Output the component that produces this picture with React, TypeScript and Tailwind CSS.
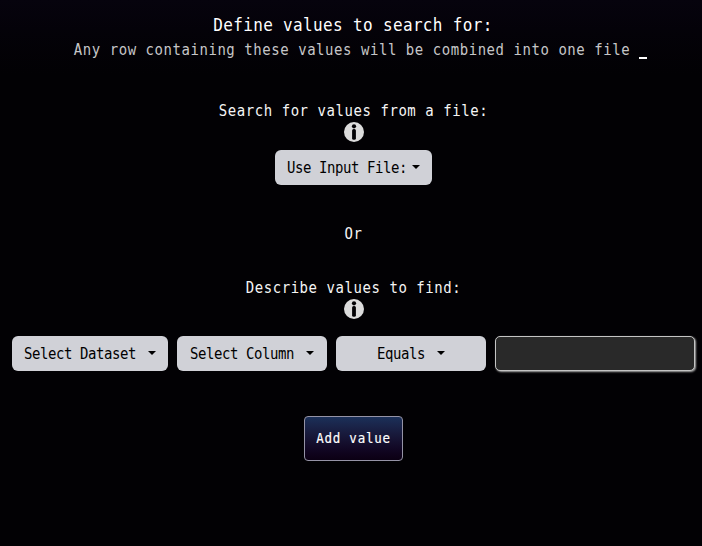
import type { ReactNode } from "react";

const MONO = "font-['DejaVu_Sans_Mono','Liberation_Mono',monospace]";

function Caret({ className = "" }: { className?: string }) {
  return (
    <span
      className={`block h-0 w-0 border-x-[4px] border-t-[4px] border-x-transparent border-t-black ${className}`}
    />
  );
}

function Select({ label, className, caret = "ml-[12px]" }: { label: string; className: string; caret?: string }) {
  return (
    <button
      className={`flex h-[35px] items-center justify-center whitespace-nowrap rounded-md bg-[#d0d1d7] text-[14px] tracking-[-0.43px] text-black ${className}`}
    >
      <span className="mt-px block scale-y-108">{label}</span>
      <Caret className={`-mt-[2px] ${caret}`} />
    </button>
  );
}

function InfoIcon() {
  return (
    <svg width="20" height="20" viewBox="0 0 20 20" className="block">
      <circle cx="10" cy="10" r="10" fill="#dcdcdc" />
      <circle cx="10" cy="4.3" r="2.1" fill="#020104" />
      <rect x="8.1" y="7" width="3.8" height="10.8" rx="1.6" fill="#020104" />
    </svg>
  );
}

function Label({ children, className = "" }: { children: ReactNode; className?: string }) {
  return (
    <p className={`h-5 origin-top scale-y-108 whitespace-nowrap text-[14px] leading-5 tracking-[0.55px] text-[#f5f5f5] ${className}`}>
      {children}
    </p>
  );
}

export default function App() {
  return (
    <main
      className={`flex h-[546px] w-[702px] flex-col items-center overflow-hidden bg-[#020104] bg-linear-to-b from-[#06030d] to-[#020104] to-[75px] pl-[5px] ${MONO}`}
    >
      <h1 className="mt-[13px] mr-px h-6 origin-top scale-y-107 whitespace-nowrap text-[16px] leading-6 tracking-[0.35px] text-white">
        Define values to search for:
      </h1>
      <div className="mt-[2px] ml-[14px] flex h-5 items-end">
        <p className="origin-top scale-y-108 whitespace-nowrap text-[14px] leading-5 tracking-[0.545px] text-[#c6c6c8]">
          Any row containing these values will be combined into one file
        </p>
        <span className="ml-[9px] block h-[2px] w-[8px] bg-white" />
      </div>

      <Label className="mt-[41px]">Search for values from a file:</Label>
      <div className="mt-[2px]">
        <InfoIcon />
      </div>
      <Select label="Use Input File:" className="mt-[8px] w-[157px]" caret="ml-[5px]" />

      <Label className="mt-[38px]">Or</Label>

      <Label className="mt-[34px]">Describe values to find:</Label>
      <div className="mt-[2px]">
        <InfoIcon />
      </div>

      <div className="mt-[17px] flex gap-[9px]">
        <Select label="Select Dataset" className="w-[156px]" />
        <Select label="Select Column" className="w-[150px]" />
        <Select label="Equals" className="w-[150px]" />
        <input
          aria-label="Value"
          className="h-[35px] w-[200px] rounded-[5px] border border-[#c4c4c4] bg-[#292929] px-2 text-[14px] text-white shadow-[1px_1px_2px_#aaaaaa] outline-none"
        />
      </div>

      <button className="mt-[45px] h-[45px] w-[99px] whitespace-nowrap rounded-[4px] border border-[#9593a6] bg-linear-to-b from-[#1b3059] to-[#0b0013] text-[12.5px] tracking-[0.75px] text-white [-webkit-text-stroke:0.15px_white]">
        <span className="block origin-top scale-y-108">Add value</span>
      </button>
    </main>
  );
}
